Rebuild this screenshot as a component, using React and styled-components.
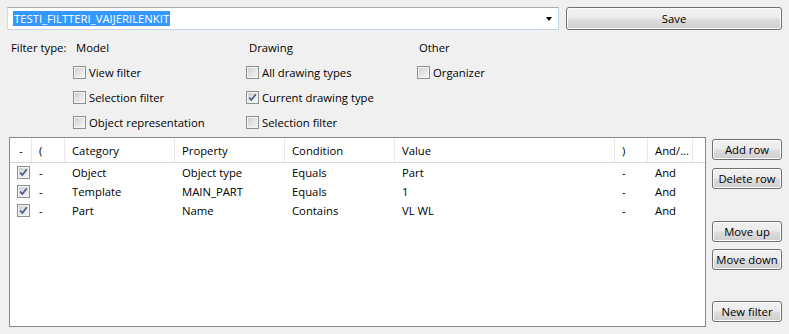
import React from 'react'
import styled, { createGlobalStyle, css } from 'styled-components'

const GlobalStyle = createGlobalStyle`
  html, body {
    margin: 0;
    padding: 0;
    background: #f0f0f0;
  }
  body {
    font-family: 'Open Sans', 'Noto Sans', sans-serif;
    font-size: 11.3px;
    color: #000;
  }
`

const Window = styled.div`
  width: 789px;
  height: 334px;
  box-sizing: border-box;
  padding: 7px 7px 0 7px;
  background: #f0f0f0;
  display: flex;
  flex-direction: column;
`

const TopBar = styled.div`
  display: flex;
  gap: 7px;
  height: 23px;
`

const Combo = styled.div`
  flex: 1;
  box-sizing: border-box;
  display: flex;
  align-items: center;
  background: #fff;
  border: 1px solid #abadb3;
  border-color: #abadb3 #c5d6ea #c5d6ea #d5dbe3;
  padding: 0 5px;
`

const Selected = styled.span`
  background: #3399ff;
  color: #fff;
  line-height: 15px;
  padding: 0 1px;
`

const Arrow = styled.span`
  margin-left: auto;
  width: 0;
  height: 0;
  border-left: 3.5px solid transparent;
  border-right: 3.5px solid transparent;
  border-top: 4px solid #000;
  margin-right: 1px;
`

const buttonLook = css`
  box-sizing: border-box;
  border: 1px solid #707070;
  border-radius: 3px;
  background: linear-gradient(#f2f2f2 0%, #ebebeb 48%, #dddddd 52%, #cfcfcf 100%);
  box-shadow: inset 0 0 0 1px #fcfcfc;
  font: inherit;
  color: #000;
  padding: 0;
  display: flex;
  align-items: center;
  justify-content: center;
`

const SaveButton = styled.button`
  ${buttonLook};
  width: 216px;
  height: 23px;
`

const FilterGrid = styled.div`
  margin-top: 5px;
  display: grid;
  grid-template-columns: 66px 173px 171px 1fr;
  grid-auto-rows: 25px;
  align-items: center;
`

const Heading = styled.span`
  padding-left: ${(p) => p.$indent || 3}px;
`

const Option = styled.label`
  display: flex;
  align-items: center;
  gap: 3px;
`

const Box = styled.span`
  box-sizing: border-box;
  width: 13px;
  height: 13px;
  flex: none;
  border: 1px solid #8e8f8f;
  background: linear-gradient(135deg, #cbcbcb 0%, #e6e6e6 55%, #f7f7f7 100%);
  box-shadow: inset 0 0 0 1px #f4f4f4;
  display: flex;
  align-items: center;
  justify-content: center;
`

const CheckBox = ({ checked }) => (
  <Box>
    {checked && (
      <svg width="9" height="9" viewBox="0 0 9 9">
        <path d="M1.2 4.6 L3.4 7 L7.8 1.2" fill="none" stroke="#4a5a8f" strokeWidth="1.7" />
      </svg>
    )}
  </Box>
)

const Main = styled.div`
  margin-top: 2px;
  display: flex;
  gap: 6px;
  padding-left: 2px;
`

const TableFrame = styled.div`
  box-sizing: border-box;
  width: 697px;
  height: 190px;
  background: #fff;
  border: 1px solid #828790;
`

const Row = styled.div`
  display: grid;
  grid-template-columns: 22px 33px 110px 110px 110px 220px 33px 45px;
  height: ${(p) => (p.$header ? 24 : 19)}px;
  align-items: center;
  ${(p) =>
    p.$header &&
    css`
      border-bottom: 1px solid #d5d5d5;
    `}
`

const Cell = styled.div`
  height: 100%;
  display: flex;
  align-items: center;
  padding-left: ${(p) => p.$pad ?? 7}px;
  white-space: nowrap;
  ${(p) =>
    p.$header &&
    css`
      border-right: 1px solid #e8e8e8;
    `}
`

const SideButtons = styled.div`
  display: flex;
  flex-direction: column;
  width: 70px;
  padding-top: 2px;
`

const SideButton = styled.button`
  ${buttonLook};
  height: 21px;
  margin-top: ${(p) => p.$gap || 0}px;
`

const header = ['-', '(', 'Category', 'Property', 'Condition', 'Value', ')', 'And/...']

const rows = [
  ['Object', 'Object type', 'Equals', 'Part'],
  ['Template', 'MAIN_PART', 'Equals', '1'],
  ['Part', 'Name', 'Contains', 'VL WL'],
]

export default function App() {
  return (
    <>
      <GlobalStyle />
      <Window>
        <TopBar>
          <Combo>
            <Selected>TESTI_FILTTERI_VAIJERILENKIT</Selected>
            <Arrow />
          </Combo>
          <SaveButton>Save</SaveButton>
        </TopBar>

        <FilterGrid>
          <Heading $indent={4}>Filter type:</Heading>
          <Heading>Model</Heading>
          <Heading>Drawing</Heading>
          <Heading $indent={2}>Other</Heading>

          <span />
          <Option><CheckBox />View filter</Option>
          <Option><CheckBox />All drawing types</Option>
          <Option><CheckBox />Organizer</Option>

          <span />
          <Option><CheckBox />Selection filter</Option>
          <Option><CheckBox checked />Current drawing type</Option>
          <span />

          <span />
          <Option><CheckBox />Object representation</Option>
          <Option><CheckBox />Selection filter</Option>
          <span />
        </FilterGrid>

        <Main>
          <TableFrame>
            <Row $header>
              {header.map((h, i) => (
                <Cell key={i} $header $pad={i === 0 ? 9 : 7}>
                  {h}
                </Cell>
              ))}
            </Row>
            {rows.map((r, i) => (
              <Row key={i}>
                <Cell $pad={7}>
                  <CheckBox checked />
                </Cell>
                <Cell>-</Cell>
                {r.map((v, j) => (
                  <Cell key={j}>{v}</Cell>
                ))}
                <Cell>-</Cell>
                <Cell>And</Cell>
              </Row>
            ))}
          </TableFrame>

          <SideButtons>
            <SideButton>Add row</SideButton>
            <SideButton $gap={8}>Delete row</SideButton>
            <SideButton $gap={32}>Move up</SideButton>
            <SideButton $gap={7}>Move down</SideButton>
            <SideButton $gap={31}>New filter</SideButton>
          </SideButtons>
        </Main>
      </Window>
    </>
  )
}
